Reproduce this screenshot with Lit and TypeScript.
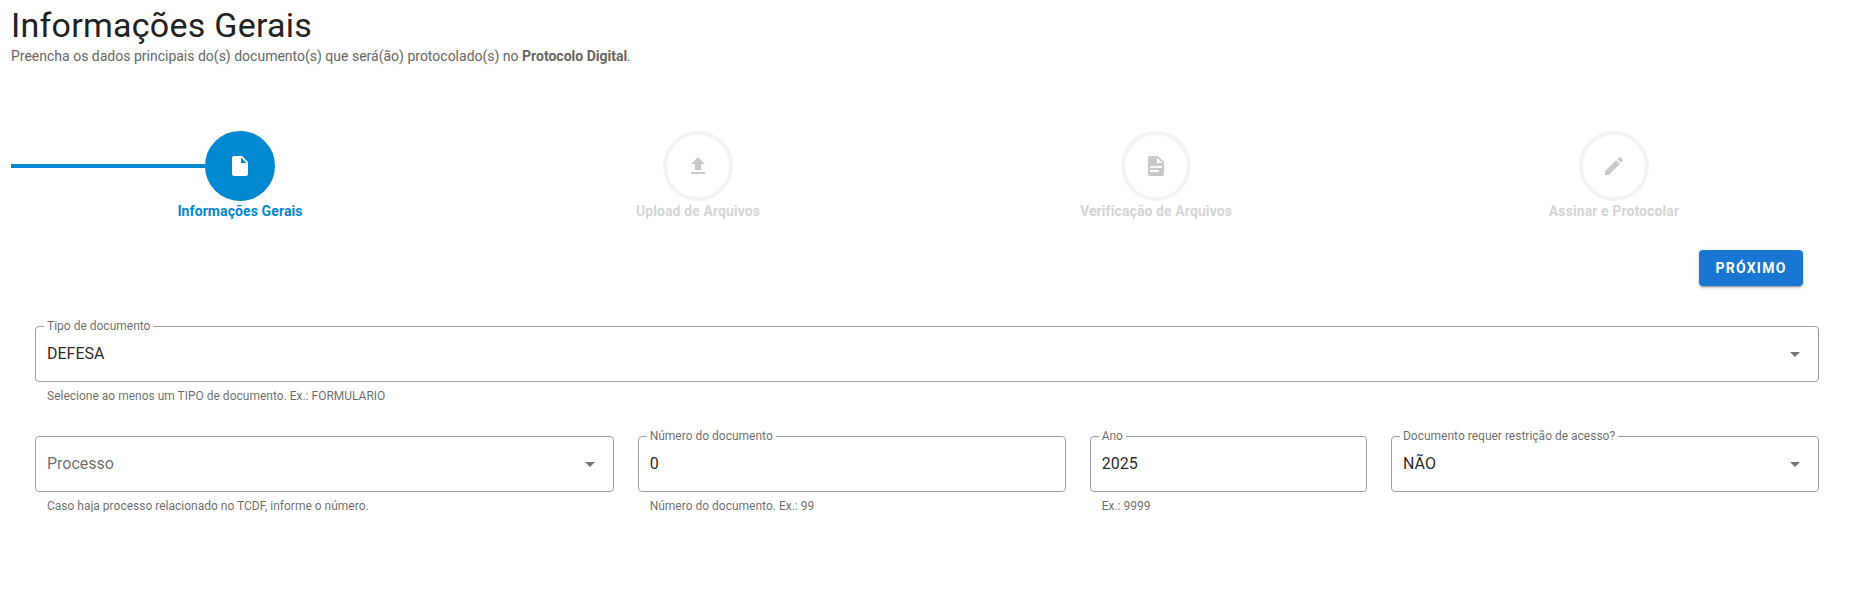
import { LitElement, html, css, svg } from "lit";
import { customElement } from "lit/decorators.js";

const ICONS = {
  file: "M13,9V3.5L18.5,9M6,2C4.89,2 4,2.89 4,4V20A2,2 0 0,0 6,22H18A2,2 0 0,0 20,20V8L14,2H6Z",
  upload: "M9,16V10H5L12,3L19,10H15V16H9M5,20V18H19V20H5Z",
  doc: "M13,9H18.5L13,3.5V9M6,2H14L20,8V20A2,2 0 0,1 18,22H6C4.89,22 4,21.1 4,20V4C4,2.89 4.89,2 6,2M15,18V16H6V18H15M18,14V12H6V14H18Z",
  pencil: "M20.71,7.04C21.1,6.65 21.1,6 20.71,5.63L18.37,3.29C18,2.9 17.35,2.9 16.96,3.29L15.12,5.12L18.87,8.87M3,17.25V21H6.75L17.81,9.93L14.06,6.18L3,17.25Z",
  down: "M7,10L12,15L17,10H7Z",
};

const icon = (d: string) => html`<svg class="icon" viewBox="0 0 24 24">${svg`<path d=${d}></path>`}</svg>`;

const STEPS = [
  { label: "Informações Gerais", d: ICONS.file, active: true },
  { label: "Upload de Arquivos", d: ICONS.upload, active: false },
  { label: "Verificação de Arquivos", d: ICONS.doc, active: false },
  { label: "Assinar e Protocolar", d: ICONS.pencil, active: false },
];

@customElement("app-root")
export class AppRoot extends LitElement {
  static styles = css`
    :host {
      display: block;
      box-sizing: border-box;
      width: 100%;
      padding: 0 13px 0 11px;
      font-family: Roboto, "Noto Sans", sans-serif;
      background: #fff;
      color: rgba(0, 0, 0, 0.87);
    }
    h1 {
      margin: 0;
      padding-top: 5px;
      font-size: 34px;
      line-height: 40px;
      font-weight: 400;
      letter-spacing: 0.25px;
      color: #212121;
    }
    .sub {
      margin: 1px 0 0;
      font-size: 14px;
      line-height: 20px;
      color: #666;
    }
    .sub b { font-weight: 700; }
    .stepper {
      display: grid;
      grid-template-columns: repeat(4, 1fr);
      margin-top: 65px;
    }
    .step {
      display: flex;
      flex-direction: column;
      align-items: stretch;
    }
    .head { display: flex; align-items: center; }
    .line { flex: 1; height: 4px; }
    .active .line.before { background: #0288d1; }
    .circle {
      box-sizing: border-box;
      width: 70px;
      height: 70px;
      border-radius: 50%;
      border: 4px solid #f3f3ef;
      display: flex;
      align-items: center;
      justify-content: center;
    }
    .active .circle { background: #0288d1; border-color: #0288d1; }
    .icon { width: 24px; height: 24px; display: block; fill: #c8c8c8; }
    .active .icon { fill: #fff; }
    .label {
      text-align: center;
      font-size: 14px;
      line-height: 20px;
      font-weight: 700;
      letter-spacing: 0.1px;
      color: #d4d4d4;
    }
    .active .label { color: #0288d1; }
    .actions {
      display: flex;
      justify-content: flex-end;
      margin: 29px 40px 0 0;
    }
    button {
      width: 104px;
      height: 36px;
      padding: 0;
      border: 0;
      border-radius: 4px;
      background: #1976d2;
      color: #fff;
      font: 700 14px Roboto, sans-serif;
      letter-spacing: 1.25px;
      box-shadow: 0 3px 1px -2px rgba(0,0,0,.2), 0 2px 2px 0 rgba(0,0,0,.14), 0 1px 5px 0 rgba(0,0,0,.12);
    }
    .form { margin: 40px 12px 0; }
    .row { display: flex; }
    .row + .row { margin-top: 34px; }
    .col { box-sizing: border-box; padding: 0 12px; }
    .c12 { width: 100%; }
    .c4 { width: 33.3333%; }
    .c3 { width: 25%; }
    .c2 { width: 16.6667%; }
    .field {
      position: relative;
      box-sizing: border-box;
      height: 56px;
      border: 1px solid #9e9e9e;
      border-radius: 4px;
      display: flex;
      align-items: center;
      padding: 0 11px;
      font-size: 16px;
    }
    .value { flex: 1; padding-bottom: 2px; color: rgba(0, 0, 0, 0.87); }
    .placeholder { color: rgba(0, 0, 0, 0.6); }
    .float {
      position: absolute;
      left: 8px;
      top: -7px;
      padding: 0 3px;
      background: #fff;
      font-size: 12px;
      line-height: 12px;
      color: rgba(0, 0, 0, 0.6);
    }
    .field .icon { fill: rgba(0, 0, 0, 0.54); }
    .hint {
      padding: 8px 12px 0;
      font-size: 12px;
      line-height: 12px;
      color: rgba(0, 0, 0, 0.6);
    }
  `;

  private field(cls: string, label: string, value: string, hint: string, select: boolean) {
    return html`
      <div class="col ${cls}">
        <div class="field">
          ${label ? html`<span class="float">${label}</span>` : ""}
          <span class="value ${label ? "" : "placeholder"}">${value}</span>
          ${select ? icon(ICONS.down) : ""}
        </div>
        ${hint ? html`<div class="hint">${hint}</div>` : ""}
      </div>
    `;
  }

  render() {
    return html`
      <h1>Informações Gerais</h1>
      <p class="sub">Preencha os dados principais do(s) documento(s) que será(ão) protocolado(s) no <b>Protocolo Digital</b>.</p>
      <div class="stepper">
        ${STEPS.map(
          (s) => html`
            <div class="step ${s.active ? "active" : ""}">
              <div class="head">
                <span class="line before"></span>
                <span class="circle">${icon(s.d)}</span>
                <span class="line"></span>
              </div>
              <div class="label">${s.label}</div>
            </div>
          `
        )}
      </div>
      <div class="actions"><button>PRÓXIMO</button></div>
      <div class="form">
        <div class="row">
          ${this.field("c12", "Tipo de documento", "DEFESA", "Selecione ao menos um TIPO de documento. Ex.: FORMULARIO", true)}
        </div>
        <div class="row">
          ${this.field("c4", "", "Processo", "Caso haja processo relacionado no TCDF, informe o número.", true)}
          ${this.field("c3", "Número do documento", "0", "Número do documento. Ex.: 99", false)}
          ${this.field("c2", "Ano", "2025", "Ex.: 9999", false)}
          ${this.field("c3", "Documento requer restrição de acesso?", "NÃO", "", true)}
        </div>
      </div>
    `;
  }
}
